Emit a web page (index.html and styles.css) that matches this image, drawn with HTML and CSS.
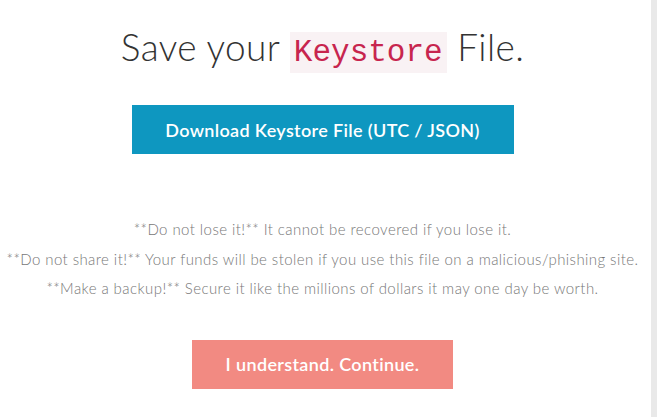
FILE: index.html
```html
<!DOCTYPE html>
<html>
<head>
<meta charset="utf-8">
<link rel="stylesheet" href="styles.css">
</head>
<body>
<div class="frame">
  <main class="content">
    <h1 class="title">Save your <code class="code">Keystore</code> File.</h1>
    <a class="btn btn-primary">Download Keystore File (UTC / JSON)</a>
    <div class="notes">
      <p>**Do not lose it!** It cannot be recovered if you lose it.</p>
      <p>**Do not share it!** Your funds will be stolen if you use this file on a malicious/phishing site.</p>
      <p>**Make a backup!** Secure it like the millions of dollars it may one day be worth.</p>
    </div>
    <a class="btn btn-danger">I understand. Continue.</a>
  </main>
  <div class="rail"></div>
</div>
</body>
</html>
```
FILE: styles.css
```css
html, body {
  margin: 0;
  padding: 0;
  background: #fff;
}
.frame {
  display: flex;
  width: 659px;
  height: 417px;
  overflow: hidden;
}
.content {
  width: 645px;
  flex: none;
  display: flex;
  flex-direction: column;
  align-items: center;
  font-family: Lato, "Open Sans", sans-serif;
}
.rail {
  width: 6px;
  margin-left: 6px;
  background: #e9e9e9;
  flex: none;
}
.title {
  margin: 25px 0 0;
  font-size: 37px;
  font-weight: 300;
  line-height: 44px;
  letter-spacing: 0.4px;
  color: #333;
}
.code {
  font-family: "Liberation Mono", "DejaVu Sans Mono", monospace;
  font-size: 31px;
  letter-spacing: 0;
  color: #c7254e;
  background: #f9f2f4;
  padding: 3px 4px;
}
.btn {
  display: flex;
  align-items: center;
  justify-content: center;
  height: 49px;
  color: #fff;
  font-size: 18px;
  font-weight: 600;
  letter-spacing: 0.35px;
  box-sizing: border-box;
}
.btn-primary {
  margin-top: 30px;
  width: 382px;
  background: #0e97c0;
}
.notes {
  margin-top: 61px;
  text-align: center;
  color: #777;
  font-size: 15px;
  font-weight: 300;
  letter-spacing: 0.43px;
}
.notes p {
  margin: 0;
  line-height: 29.5px;
  white-space: nowrap;
}
.btn-danger {
  margin-top: 36px;
  width: 261px;
  background: #f28a82;
}
```
